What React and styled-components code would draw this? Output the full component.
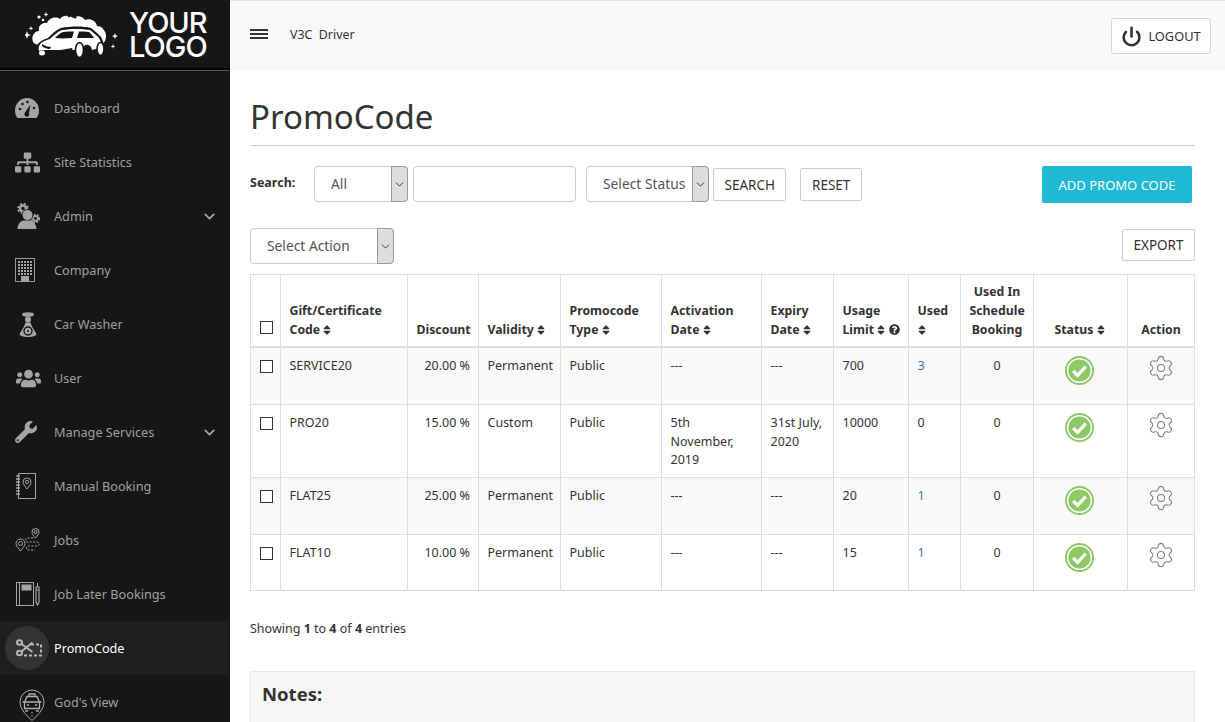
import React from 'react';
import styled, { createGlobalStyle } from 'styled-components';
import { ChevronDown, Power, Settings } from 'lucide-react';
import { FaSitemap, FaUsers, FaWrench, FaSort, FaQuestionCircle } from 'react-icons/fa';

const FONT = '"Noto Sans", "Open Sans", sans-serif';

const Global = createGlobalStyle`
  html, body { margin: 0; padding: 0; height: 100%; overflow: hidden; }
  body { font-family: ${FONT}; font-size: 13px; color: #333; background: #fff; }
  * { box-sizing: border-box; }
`;

const GaugeIcon = () => (
  <svg width="24" height="20" viewBox="0 0 24 20">
    <path fill="#a5a5a5" d="M2.500 20C1 18 0 15.500 0 12.500 0 5.500 5.500 0 12 0s12 5.500 12 12.500c0 3-1 5.500-2.500 7.500z" />
    <g fill="#161616">
      <circle cx="5" cy="11" r="1.300" />
      <circle cx="7.500" cy="6" r="1.300" />
      <circle cx="12.500" cy="4" r="1.300" />
      <circle cx="19" cy="10" r="1.300" />
      <path d="M15.500 6.500L14 15a2.500 2.500 0 1 1-4-.500z" />
    </g>
  </svg>
);

const AdminIcon = () => (
  <svg width="23" height="26" viewBox="0 0 23 26" fill="#a5a5a5">
    <circle cx="6" cy="5.500" r="3" fill="none" stroke="#a5a5a5" strokeWidth="2.500" />
    <circle cx="6" cy="5.500" r="4.800" fill="none" stroke="#a5a5a5" strokeWidth="1.800" strokeDasharray="2 1.800" />
    <circle cx="18.500" cy="15.500" r="2.400" fill="none" stroke="#a5a5a5" strokeWidth="2" />
    <circle cx="18.500" cy="15.500" r="4" fill="none" stroke="#a5a5a5" strokeWidth="1.500" strokeDasharray="1.800 1.500" />
    <circle cx="10.500" cy="12" r="5.500" stroke="#161616" />
    <path d="M0.500 26c0-5 3-8 6-8.500h7c3 .5 5.500 3.500 6 8.500z" />
  </svg>
);

const BuildingIcon = () => (
  <svg width="20" height="24" viewBox="0 0 20 24">
    <rect x="0.500" y="0.500" width="19" height="23" fill="none" stroke="#999" />
    {[3, 6, 9, 12, 15].map((y) =>
      [3, 6, 9, 12, 15].map((x) => <rect key={x + '-' + y} x={x} y={y} width="2" height="2" fill="#a5a5a5" />)
    )}
    <rect x="6" y="18" width="8" height="5" fill="#a5a5a5" />
  </svg>
);

const DriverIcon = () => (
  <svg width="18" height="25" viewBox="0 0 18 25" fill="#a5a5a5">
    <ellipse cx="9" cy="2.500" rx="6" ry="2.300" />
    <circle cx="9" cy="7.500" r="3" />
    <path d="M6.500 10.500h5l1.500 4 4.500 7.500c0 1.500-3 3-8.500 3S.5 23.500.5 22L5 14.500z" />
    <circle cx="9" cy="19" r="4" fill="none" stroke="#161616" strokeWidth="1.400" />
    <circle cx="9" cy="19" r="1" fill="#161616" />
  </svg>
);

const BookIcon = () => (
  <svg width="20" height="26" viewBox="0 0 20 26" fill="none" stroke="#a5a5a5">
    <rect x="2.500" y="0.500" width="17" height="25" />
    <path d="M0 3h4M0 6h4M0 9h4M0 12h4M0 15h4M0 18h4M0 21h4" strokeWidth="1.400" />
    <path d="M11 16c-3-4-4-5-4-7a4 4 0 0 1 8 0c0 2-1 3-4 7z" />
    <circle cx="11" cy="9" r="1.600" />
  </svg>
);

const RouteIcon = () => (
  <svg width="26" height="26" viewBox="0 0 26 26" fill="none" stroke="#a5a5a5">
    <path d="M5.500 24c-3-4-4.500-5.500-4.500-7.500a4.500 4.500 0 0 1 9 0c0 2-1.500 3.500-4.500 7.500z" />
    <circle cx="5.500" cy="16.500" r="2" />
    <path d="M20 11c-2-3-3-4-3-6a3.500 3.500 0 0 1 7 0c0 2-1 3-3.500 6z" />
    <circle cx="20.500" cy="5" r="1.500" />
    <path d="M18 11h-6c-2 0-2 4 0 4h10c3 0 3 4 0 4H13c-2 0-2 4 0 4h7" strokeDasharray="2 1.500" />
  </svg>
);

const PlannerIcon = () => (
  <svg width="24" height="24" viewBox="0 0 24 24" fill="none" stroke="#a5a5a5">
    <rect x="0.500" y="0.500" width="17" height="23" />
    <path d="M3.500 0.500v23" />
    <rect x="6" y="3" width="9" height="5" fill="#a5a5a5" />
    <path d="M20 5h3v15l-1.500 3-1.500-3zM20 8h3" strokeWidth="1.200" />
    <path d="M21.500 1v4" />
  </svg>
);

const ScissorsIcon = () => (
  <svg width="26" height="18" viewBox="0 0 26 18" fill="none" stroke="#b5b5b5" strokeWidth="2">
    <ellipse cx="3.500" cy="3.500" rx="2.500" ry="2.300" />
    <ellipse cx="3.500" cy="14" rx="2.500" ry="2.300" />
    <path d="M5.500 5l11 8M5.500 12.500l11-9" />
    <path d="M15 5.500h10v11H8" strokeDasharray="3 2" />
  </svg>
);

const TaxiPinIcon = () => (
  <svg width="26" height="32" viewBox="0 0 26 32" fill="none" stroke="#b0b0b0">
    <path d="M13 31.500C8 27 1 20.500 1 13a12 12 0 0 1 24 0c0 7.500-7 14-12 18.500z" />
    <path d="M5.500 19.500v-6l2.500-6h10l2.500 6v6zM10 7V5h6v2M3.500 13h19" strokeWidth="1.300" />
    <path d="M8 16h2M16 16h2M6 22h3M17 22h3" strokeWidth="1.500" />
    <path d="M13 23v6" strokeDasharray="1.500 1.500" />
  </svg>
);

const Logo = () => (
  <LogoWrap>
    <svg width="94" height="50" viewBox="0 0 94 50">
      <path
        fill="#fff"
        d="M8 33c-2-5 1-11 6-11-1-5 3-9 8-8 2-5 9-7 13-4 3-4 9-4 13-1 3-3 10-2 12 2 5-2 11 1 12 6 5 0 9 5 9 10 0 4-2 8-6 9H16c-4 0-7-1-8-3z"
      />
      <path
        fill="#161616"
        d="M13 44c-2-3-2-7 0-9 2-3 7-5 10-6 4-4 8-8 13-10 10-2 22-2 30 0 5 4 10 8 11 11 2 3 2 8 1 12l-3 3H16z"
      />
      <path
        fill="#fff"
        d="M14 42c-1-3 0-6 2-8 2-2 6-3 9-4 3-3 7-7 12-9 9-1.500 20-1.500 28 0 4 3 9 7 10 10 1 2 1 5 0 8l-8 2c-1-7-9-7-10 0H25c-3 0-9 0-11 1z"
      />
      <path fill="#161616" d="M30 29c2-2 5-5 8-6 3-.5 8-.5 11-.5l-2 6.500c-6 .5-12 .5-17 0zM52 29l2-6.500c3 0 7 0 10 .5 2 1.500 3.500 3.500 5 6z" />
      <path fill="#161616" d="M17 35c3 2 6 3 9 3l-1 2c-3 0-6-1-8-3zM30 42l17-3 .5 2-17 3z" />
      <ellipse cx="54.500" cy="41" rx="4" ry="7.500" fill="#fff" stroke="#161616" strokeWidth="1.600" />
      <ellipse cx="75.500" cy="40" rx="3.500" ry="6.500" fill="#fff" stroke="#161616" strokeWidth="1.600" />
      <ellipse cx="17" cy="44" rx="3" ry="2.500" fill="#fff" />
      <path fill="#fff" d="M2 22l1 3 3 1-3 1-1 3-1-3-2-1 2-1zM90 24l.8 2.300 2.400.8-2.400.8-.8 2.300-.8-2.300-2.400-.8 2.400-.8zM88 35l.6 1.800 1.800.6-1.800.6-.6 1.800-.6-1.800-1.800-.6 1.800-.6zM6 17l.6 1.800 1.800.6-1.800.6-.6 1.800-.6-1.800-1.800-.6 1.800-.6zM21 3l.7 1.800 1.800.7-1.800.7-.7 1.800-.7-1.800-1.800-.7 1.800-.7z" />
      <circle cx="14" cy="8" r="1.600" fill="#fff" />
      <circle cx="18" cy="11" r="1.300" fill="#fff" />
      <circle cx="44" cy="7" r="1.300" fill="#161616" />
      <circle cx="50" cy="8" r="1.600" fill="#161616" />
    </svg>
    <LogoText>YOUR<br />LOGO</LogoText>
  </LogoWrap>
);

const NAV = [
  { label: 'Dashboard', icon: <GaugeIcon /> },
  { label: 'Site Statistics', icon: <FaSitemap size={25} /> },
  { label: 'Admin', icon: <AdminIcon />, dx: 1, more: true },
  { label: 'Company', icon: <BuildingIcon />, dx: -2.500 },
  { label: 'Car Washer', icon: <DriverIcon />, dx: 1 },
  { label: 'User', icon: <FaUsers size={25} />, dx: 1 },
  { label: 'Manage Services', icon: <FaWrench size={22} />, dx: -1, more: true },
  { label: 'Manual Booking', icon: <BookIcon />, dx: -1 },
  { label: 'Jobs', icon: <RouteIcon />, dx: 1 },
  { label: 'Job Later Bookings', icon: <PlannerIcon />, dx: 1 },
  { label: 'PromoCode', icon: <ScissorsIcon />, dx: 2, active: true },
  { label: "God's View", icon: <TaxiPinIcon />, dx: 5, dy: 3 },
];

const COLS = [30, 127, 71, 82, 101, 100, 72, 75, 52, 73, 94, 67];

const ROWS = [
  { code: 'SERVICE20', discount: '20.00 %', validity: 'Permanent', start: '---', end: '---', limit: '700', used: '3', link: true, alt: true, h: 58 },
  { code: 'PRO20', discount: '15.00 %', validity: 'Custom', start: '5th November, 2019', end: '31st July, 2020', limit: '10000', used: '0', h: 73 },
  { code: 'FLAT25', discount: '25.00 %', validity: 'Permanent', start: '---', end: '---', limit: '20', used: '1', link: true, alt: true, h: 57 },
  { code: 'FLAT10', discount: '10.00 %', validity: 'Permanent', start: '---', end: '---', limit: '15', used: '1', link: true, h: 56 },
];

const Sort = () => <SortIcon><FaSort size={12} /></SortIcon>;

const StatusIcon = () => (
  <svg width="29" height="29" viewBox="0 0 30 30">
    <circle cx="15" cy="15" r="14" fill="#fff" stroke="#8fc866" strokeWidth="2" />
    <circle cx="15" cy="15" r="11.500" fill="#8fc866" />
    <path d="M8.500 15.500l4.500 4.500 8.500-9" fill="none" stroke="#fff" strokeWidth="3.400" />
  </svg>
);

const Select = ({ label, width }) => (
  <SelectBox $width={width}>
    <SelectLabel>{label}</SelectLabel>
    <SelectArrow><ChevronDown size={13} strokeWidth={1.800} /></SelectArrow>
  </SelectBox>
);

export default function App() {
  return (
    <Shell>
      <Global />
      <Sidebar>
        <LogoBar><Logo /></LogoBar>
        <Nav>
          {NAV.map((item) => (
            <NavItem key={item.label} $active={item.active}>
              <NavIcon $active={item.active} $dx={item.dx || 0} $dy={item.dy || 0}>{item.icon}</NavIcon>
              <NavLabel $active={item.active}>{item.label}</NavLabel>
              {item.more && <NavMore><ChevronDown size={17} strokeWidth={2.500} /></NavMore>}
            </NavItem>
          ))}
        </Nav>
      </Sidebar>
      <Main>
        <TopBar>
          <Burger><span /><span /><span /></Burger>
          <Brand>V3C&nbsp; Driver</Brand>
          <LogoutButton><Power size={21} strokeWidth={3} color="#333" />LOGOUT</LogoutButton>
        </TopBar>
        <Content>
          <Title>PromoCode</Title>
          <SearchRow>
            <SearchLabel>Search:</SearchLabel>
            <Select label="All" width={94} />
            <SearchInput />
            <StatusGap><Select label="Select Status" width={123} /></StatusGap>
            <PlainButton>SEARCH</PlainButton>
            <ResetGap><PlainButton>RESET</PlainButton></ResetGap>
            <AddButton>ADD PROMO CODE</AddButton>
          </SearchRow>
          <ActionRow>
            <Select label="Select Action" width={144} />
            <ExportButton>EXPORT</ExportButton>
          </ActionRow>
          <Table>
            <colgroup>
              {COLS.map((w, i) => <Col key={i} $w={w} />)}
            </colgroup>
            <thead>
              <tr>
                <CheckTh><Check /></CheckTh>
                <Th>Gift/Certificate<br />Code <Sort /></Th>
                <Th>Discount</Th>
                <Th>Validity <Sort /></Th>
                <Th>Promocode<br />Type <Sort /></Th>
                <Th>Activation<br />Date <Sort /></Th>
                <Th>Expiry<br />Date <Sort /></Th>
                <Th>Usage<br /><NoWrap>Limit <Sort /> <HelpIcon><FaQuestionCircle size={11} /></HelpIcon></NoWrap></Th>
                <Th>Used<br /><Sort /></Th>
                <Th $center>Used In<br />Schedule<br />Booking</Th>
                <Th $center>Status <Sort /></Th>
                <Th $center>Action</Th>
              </tr>
            </thead>
            <tbody>
              {ROWS.map((r) => (
                <Row key={r.code} $alt={r.alt} $h={r.h}>
                  <Td><Check /></Td>
                  <Td>{r.code}</Td>
                  <Td $right>{r.discount}</Td>
                  <Td>{r.validity}</Td>
                  <Td>Public</Td>
                  <Td>{r.start}</Td>
                  <Td>{r.end}</Td>
                  <Td>{r.limit}</Td>
                  <Td>{r.link ? <UsedLink>{r.used}</UsedLink> : r.used}</Td>
                  <Td $center>0</Td>
                  <IconTd $top={8} $nudge={2}><StatusIcon /></IconTd>
                  <IconTd $top={6}><Settings size={28} strokeWidth={0.900} color="#808080" /></IconTd>
                </Row>
              ))}
            </tbody>
          </Table>
          <Showing>Showing <b>1</b> to <b>4</b> of <b>4</b> entries</Showing>
          <Notes><NotesTitle>Notes:</NotesTitle></Notes>
        </Content>
      </Main>
    </Shell>
  );
}

const Shell = styled.div`
  display: flex;
  width: 100%;
  height: 100vh;
  overflow: hidden;
`;

const Sidebar = styled.aside`
  width: 230px;
  flex: none;
  background: #161616;
  overflow: hidden;
`;

const LogoBar = styled.div`
  height: 70px;
  display: flex;
  align-items: center;
  padding-left: 25px;
  border-bottom: 2px solid #000;
  box-shadow: 0 1px 0 #555;
`;

const LogoWrap = styled.div`
  display: flex;
  align-items: center;
  gap: 10px;
`;

const LogoText = styled.div`
  margin-top: 2px;
  font-family: "Inter", sans-serif;
  font-size: 29px;
  line-height: 24px;
  font-weight: 500;
  letter-spacing: -1px;
  color: #fff;
`;

const Nav = styled.nav`
  padding-top: 11px;
`;

const NavItem = styled.div`
  display: flex;
  align-items: center;
  height: 54px;
  padding-right: 12px;
  background: ${(p) => (p.$active ? '#1e1e1e' : 'transparent')};
`;

const NavIcon = styled.div`
  width: 44px;
  height: 44px;
  margin: 0 5px;
  flex: none;
  display: flex;
  align-items: center;
  justify-content: center;
  border-radius: 50%;
  color: #a5a5a5;
  background: ${(p) => (p.$active ? '#333' : 'transparent')};
  svg { margin-left: ${(p) => p.$dx * 2}px; margin-top: ${(p) => p.$dy * 2}px; flex: none; }
`;

const NavLabel = styled.span`
  font-size: 12.700px;
  color: ${(p) => (p.$active ? '#fff' : '#a0a0a0')};
`;

const NavMore = styled.span`
  margin-left: auto;
  display: flex;
  color: #a5a5a5;
`;

const Main = styled.main`
  flex: 1;
  min-width: 0;
`;

const TopBar = styled.header`
  height: 71px;
  display: flex;
  align-items: center;
  padding: 0 14px 0 20px;
  background: #f8f8f8;
  border-top: 1px solid #e4e4e4;
`;

const Burger = styled.div`
  width: 18px;
  margin-bottom: 4px;
  display: flex;
  flex-direction: column;
  gap: 2px;
  span { height: 2px; background: #333; }
`;

const Brand = styled.div`
  margin-left: 22px;
  margin-bottom: 4px;
  font-size: 12.400px;
  color: #333;
`;

const LogoutButton = styled.button`
  margin-left: auto;
  height: 36px;
  width: 100px;
  display: flex;
  align-items: center;
  justify-content: center;
  gap: 6px;
  font: 12.800px ${FONT};
  color: #333;
  background: #fff;
  border: 1px solid #d5d5d5;
  border-radius: 3px;
`;

const Content = styled.div`
  padding: 0 30px 0 20px;
`;

const Title = styled.h1`
  margin: 0;
  padding: 24px 0 7px;
  height: 75px;
  font-size: 33px;
  line-height: 44px;
  font-weight: 400;
  color: #333;
  border-bottom: 1px solid #ccc;
`;

const SearchRow = styled.div`
  display: flex;
  align-items: flex-start;
  margin-top: 20px;
  height: 37px;
`;

const SearchLabel = styled.div`
  width: 64px;
  padding-top: 8px;
  font-size: 12.500px;
  font-weight: 700;
`;

const SelectBox = styled.div`
  width: ${(p) => p.$width}px;
  height: 36px;
  display: flex;
  align-items: stretch;
  background: #fff;
  border: 1px solid #ccc;
  border-radius: 4px;
`;

const SelectLabel = styled.span`
  flex: 1;
  padding-left: 16px;
  font-size: 13.800px;
  line-height: 34px;
  color: #555;
  white-space: nowrap;
`;

const SelectArrow = styled.span`
  width: 17px;
  display: flex;
  align-items: center;
  justify-content: center;
  margin: -1px;
  color: #333;
  background: #ddd;
  border: 1px solid #999;
  border-radius: 0 4px 4px 0;
`;

const SearchInput = styled.input`
  width: 163px;
  height: 36px;
  margin-left: 5px;
  border: 1px solid #ccc;
  border-radius: 4px;
`;

const StatusGap = styled.div`
  margin-left: 10px;
  margin-right: 4px;
`;

const ResetGap = styled.div`
  margin-left: 14px;
`;

const PlainButton = styled.button`
  height: 33px;
  margin-top: 2px;
  padding: 0 10.500px;
  font: 13.500px ${FONT};
  color: #333;
  background: #fff;
  border: 1px solid #ccc;
  border-radius: 2px;
`;

const ExportButton = styled(PlainButton)`
  height: 32px;
  margin-top: 1px;
`;

const AddButton = styled.button`
  margin-left: auto;
  margin-right: 3px;
  width: 150px;
  height: 37px;
  font: 13px ${FONT};
  color: #fff;
  background: #1fb9d6;
  border: none;
  border-radius: 2px;
`;

const ActionRow = styled.div`
  display: flex;
  align-items: flex-start;
  justify-content: space-between;
  margin-top: 25px;
  height: 46px;
`;

const Table = styled.table`
  width: 944px;
  table-layout: fixed;
  border-collapse: collapse;
  font-size: 12.500px;
`;

const Col = styled.col`
  width: ${(p) => p.$w}px;
`;

const Th = styled.th`
  padding: 8px 8.500px 6px;
  height: 72px;
  vertical-align: bottom;
  text-align: ${(p) => (p.$center ? 'center' : 'left')};
  font-size: 12.300px;
  line-height: 18.700px;
  font-weight: 700;
  color: #333;
  border: 1px solid #ddd;
  border-bottom: 2px solid #ddd;
`;

const CheckTh = styled(Th)`
  padding-bottom: 9px;
`;

const Row = styled.tr`
  height: ${(p) => p.$h}px;
  background: ${(p) => (p.$alt ? '#f9f9f9' : '#fff')};
`;

const Td = styled.td`
  padding: 9px ${(p) => (p.$right ? 8 : 8.500)}px 0 8.500px;
  vertical-align: top;
  text-align: ${(p) => (p.$right ? 'right' : p.$center ? 'center' : 'left')};
  line-height: 18.500px;
  color: #333;
  border: 1px solid #ddd;
`;

const IconTd = styled(Td)`
  padding-top: ${(p) => p.$top}px;
  padding-right: ${(p) => 8.500 + (p.$nudge || 0)}px;
  text-align: center;
  svg { display: block; margin: 0 auto; }
`;

const Check = styled.span`
  display: inline-block;
  width: 13px;
  height: 13px;
  vertical-align: middle;
  background: #fff;
  border: 1px solid #333;
`;

const SortIcon = styled.span`
  margin-left: -2px;
  color: #333;
  svg { vertical-align: -2px; }
`;

const NoWrap = styled.span`
  white-space: nowrap;
`;

const HelpIcon = styled.span`
  margin-left: -1px;
  svg { vertical-align: -1px; }
`;

const UsedLink = styled.a`
  color: #337ab7;
`;

const Showing = styled.div`
  margin-top: 29px;
  font-size: 12.500px;
  line-height: 18px;
`;

const Notes = styled.div`
  margin-top: 33px;
  padding: 9px 11px;
  height: 120px;
  background: #f6f8f6;
  border: 1px solid #e7e7e7;
`;

const NotesTitle = styled.h3`
  margin: 0;
  font-size: 18.500px;
  line-height: 26px;
  font-weight: 700;
  color: #333;
`;
